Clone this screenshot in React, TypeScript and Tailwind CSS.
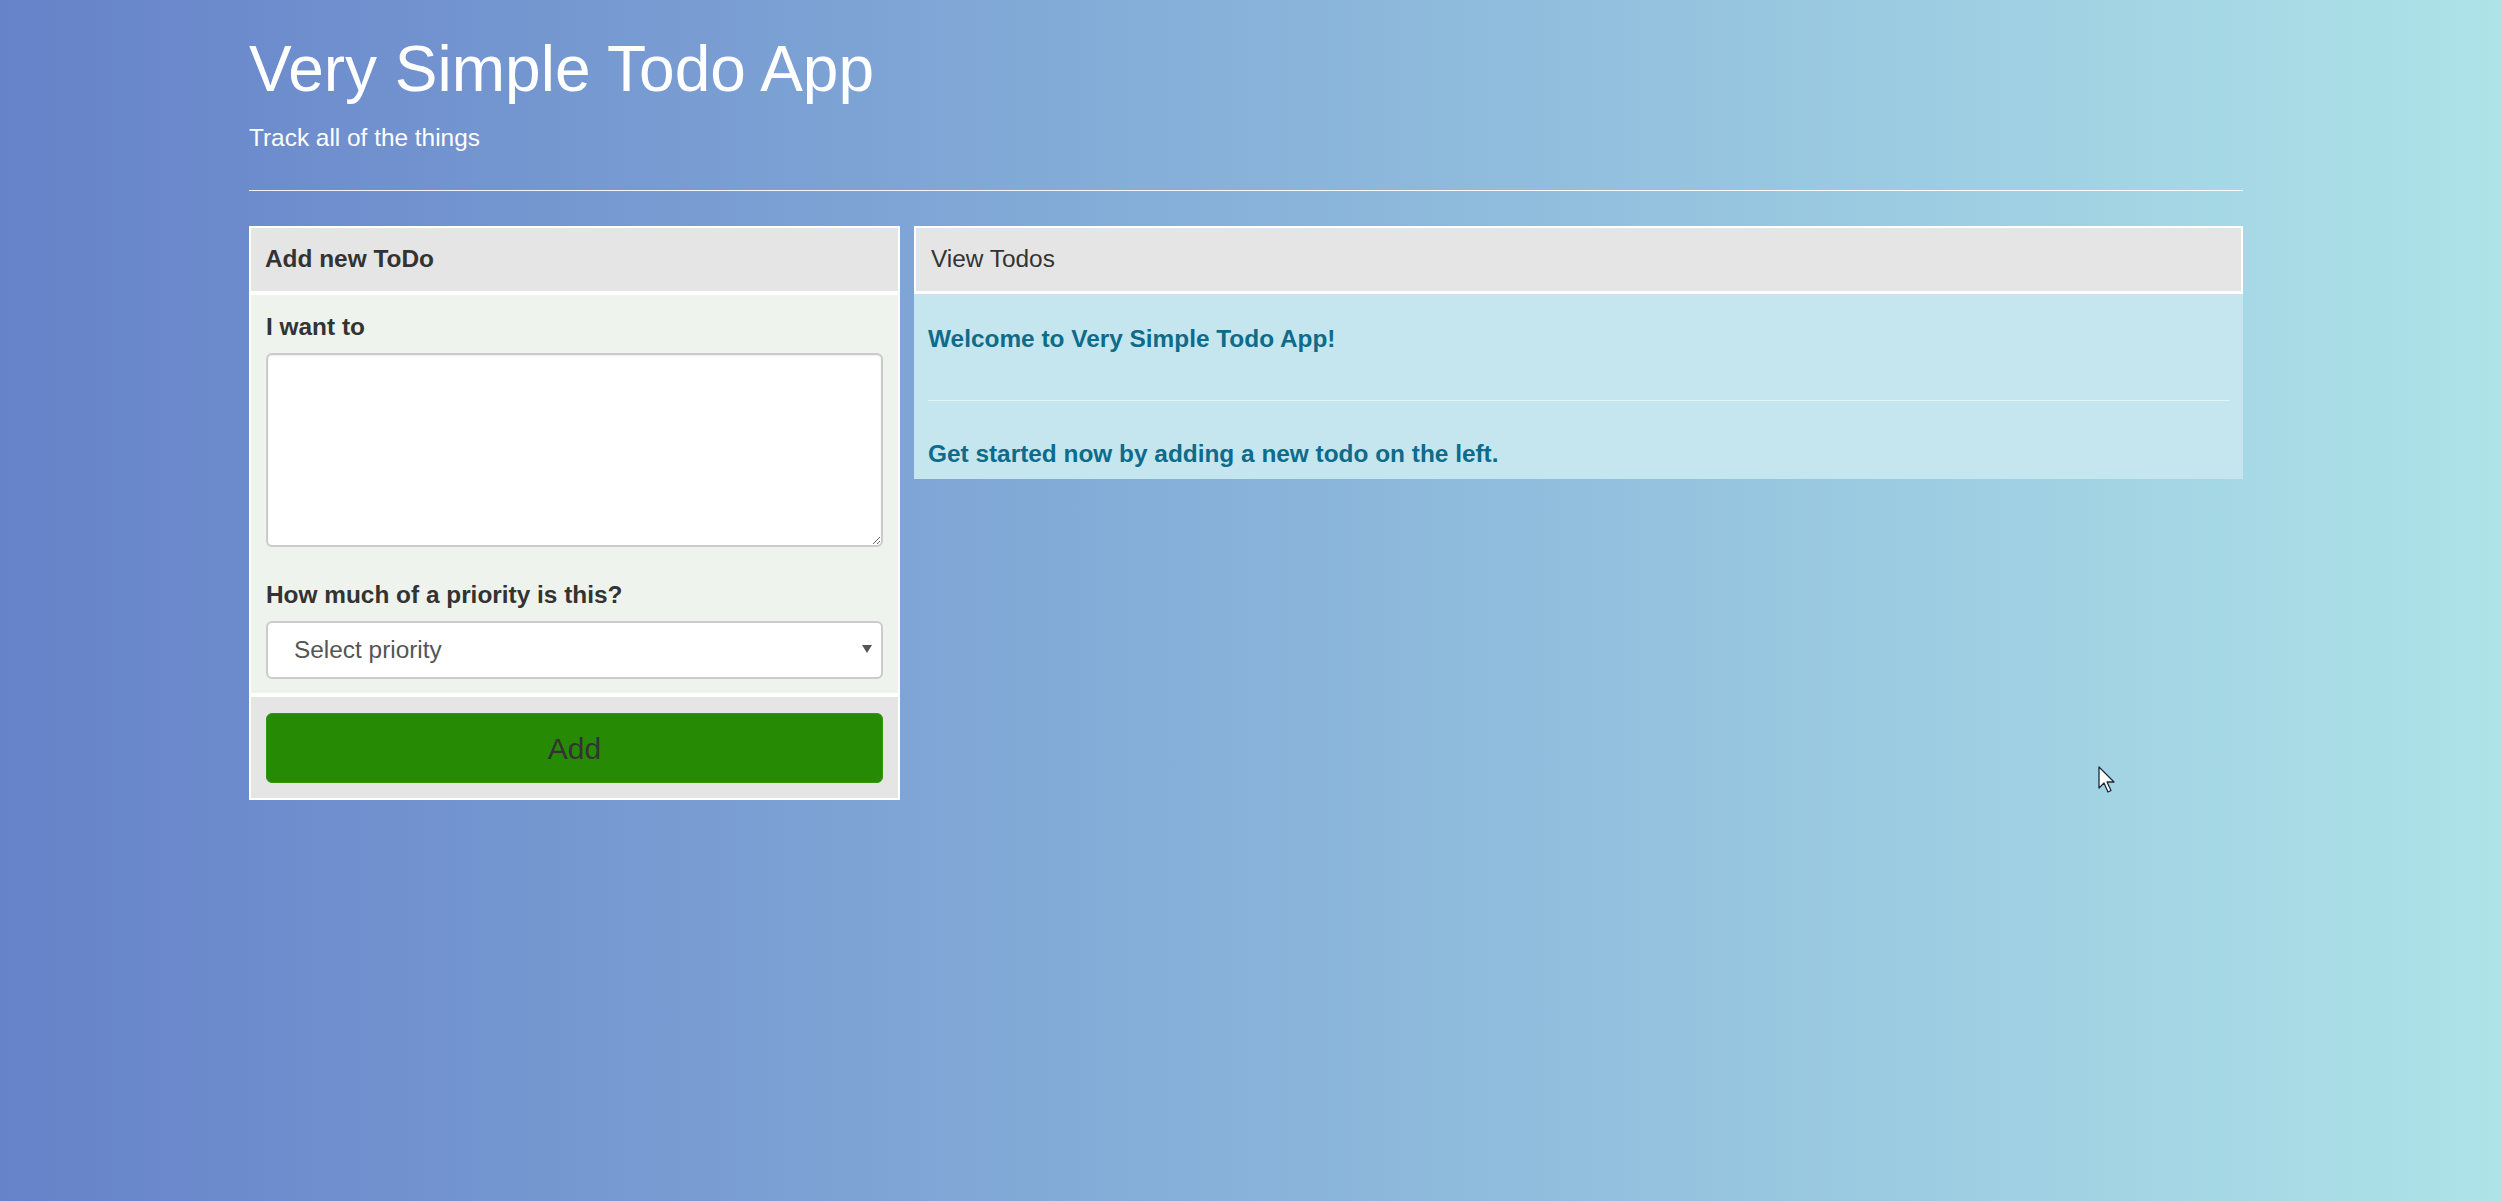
export default function App() {
  return (
    <div className="relative min-h-screen w-full bg-linear-to-r from-[#6682c9] to-[#aee3e8] font-['Liberation_Sans',Arial,sans-serif] text-[#333]">
      <div className="ml-[249px] w-[1994px] pt-[34px]">
        <h1 className="text-[64px] leading-[70px] text-white">Very Simple Todo App</h1>
        <p className="mt-[17px] text-[24.4px] leading-[34px] text-white">Track all of the things</p>
        <hr className="mt-[35px] border-t border-white/90" />

        <div className="mt-[35px] flex items-start gap-[14px] text-[24.4px]">
          {/* add form */}
          <div className="w-[651px] border-2 border-white">
            <div className="flex h-[63px] items-center bg-[#e5e5e5] px-[14px] font-bold">
              Add new ToDo
            </div>
            <div className="border-t-4 border-white bg-[#eef3ed] px-[15px] pt-[15px] pb-[14px]">
              <label className="block font-bold leading-[34px]">I want to</label>
              <textarea className="mt-[9px] block h-[194px] w-full rounded-[6px] border-2 border-[#cbcbcb] bg-white p-[10px] shadow-[inset_0_1px_2px_rgba(0,0,0,0.08)] outline-none" />
              <label className="mt-[31px] block font-bold leading-[34px]">
                How much of a priority is this?
              </label>
              <div className="relative mt-[9px]">
                <select
                  defaultValue=""
                  className="block h-[58px] w-full appearance-none rounded-[6px] border-2 border-[#cbcbcb] bg-white pl-[26px] text-[#555] outline-none"
                >
                  <option value="">Select priority</option>
                  <option value="1">Low</option>
                  <option value="2">Medium</option>
                  <option value="3">High</option>
                </select>
                <svg
                  className="pointer-events-none absolute right-[11px] top-[23px]"
                  width="10"
                  height="10"
                  viewBox="0 0 10 10"
                >
                  <path d="M0 1h10L5 9z" fill="#555" />
                </svg>
              </div>
            </div>
            <div className="border-t-4 border-white bg-[#e5e5e5] px-[15px] pt-[16px] pb-[15px]">
              <button className="h-[70px] w-full rounded-[6px] border border-[#2f9a0c] bg-[#268a05] text-[30px] text-[#333]">
                Add
              </button>
            </div>
          </div>

          {/* todo list */}
          <div className="flex-1">
            <div className="flex h-[68px] items-center border-2 border-b-[3px] border-white bg-[#e5e5e5] px-[15px]">
              View Todos
            </div>
            <div className="bg-[#c5e6ef] px-[14px] pt-[28px] pb-[8px] font-bold leading-[34px] text-[#0e6b8a]">
              <p>Welcome to Very Simple Todo App!</p>
              <div className="mt-[44px] mr-[-1px] border-t border-white/50" />
              <p className="mt-[36px]">Get started now by adding a new todo on the left.</p>
            </div>
          </div>
        </div>
      </div>

      {/* mouse pointer */}
      <svg className="absolute left-[2098px] top-[766px]" width="20" height="28" viewBox="0 0 20 28">
        <path
          d="M1 1v21l5-5 4 9 3-1.5-4-8.5h7z"
          fill="#fff"
          stroke="#1b2a36"
          strokeWidth="1.3"
          strokeLinejoin="round"
        />
      </svg>
    </div>
  )
}
